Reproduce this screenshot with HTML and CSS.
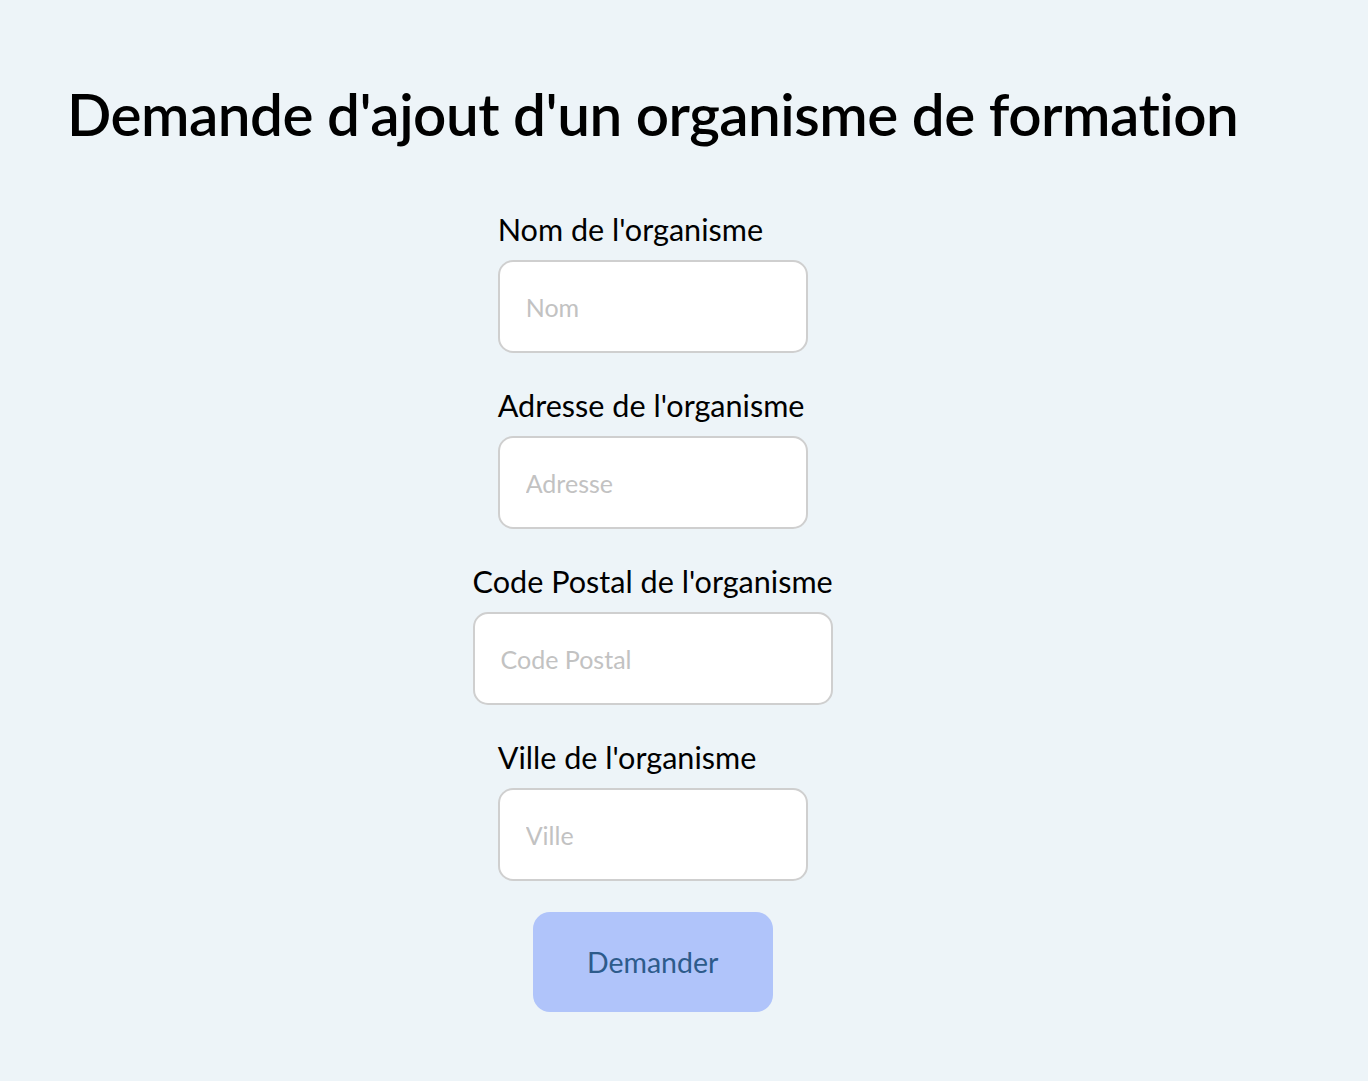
FILE: index.html
```html
<!DOCTYPE html>
<html lang="fr">
<head>
<meta charset="utf-8">
<title>Demande d'ajout d'un organisme de formation</title>
<link rel="stylesheet" href="styles.css">
</head>
<body>
<main class="page">
  <h1 class="title">Demande d'ajout d'un organisme de formation</h1>
  <form class="form">
    <div class="field">
      <label class="label" for="nom">Nom de l'organisme</label>
      <input class="input" id="nom" type="text" size="1" placeholder="Nom">
    </div>
    <div class="field">
      <label class="label" for="adresse">Adresse de l'organisme</label>
      <input class="input" id="adresse" type="text" size="1" placeholder="Adresse">
    </div>
    <div class="field">
      <label class="label" for="cp">Code Postal de l'organisme</label>
      <input class="input" id="cp" type="text" size="1" placeholder="Code Postal">
    </div>
    <div class="field">
      <label class="label" for="ville">Ville de l'organisme</label>
      <input class="input" id="ville" type="text" size="1" placeholder="Ville">
    </div>
    <button class="button" type="button">Demander</button>
  </form>
</main>
</body>
</html>
```
FILE: styles.css
```css
html, body {
  margin: 0;
  padding: 0;
}
body {
  background: #edf4f8;
  font-family: "Source Sans Pro", Lato, "Noto Sans", sans-serif;
  color: #000;
  min-height: 1081px;
  padding: 80px 0 0 67px;
  box-sizing: border-box;
}
.page {
  width: fit-content;
}
.title {
  margin: 0;
  font-size: 58.4px;
  font-weight: 600;
  line-height: 66px;
  letter-spacing: -0.5px;
  white-space: nowrap;
}
.form {
  display: flex;
  flex-direction: column;
  align-items: center;
  margin-top: 66px;
}
.field {
  display: flex;
  flex-direction: column;
  min-width: 310px;
  margin-bottom: 35px;
}
.label {
  font-size: 30.6px;
  line-height: 36px;
  margin-bottom: 12px;
  white-space: nowrap;
}
.input {
  box-sizing: border-box;
  width: 100%;
  height: 93px;
  border: 2px solid #cfcfcf;
  border-radius: 15px;
  background: #fff;
  padding: 0 26px;
  font-family: inherit;
  font-size: 25px;
  outline: none;
}
.input::placeholder {
  color: #c2c2c2;
}
.button {
  margin-top: -4px;
  width: 240px;
  height: 100px;
  border: none;
  border-radius: 17px;
  background: #b0c4fa;
  color: #2d5b8b;
  font-family: inherit;
  font-size: 28.5px;
}
```
